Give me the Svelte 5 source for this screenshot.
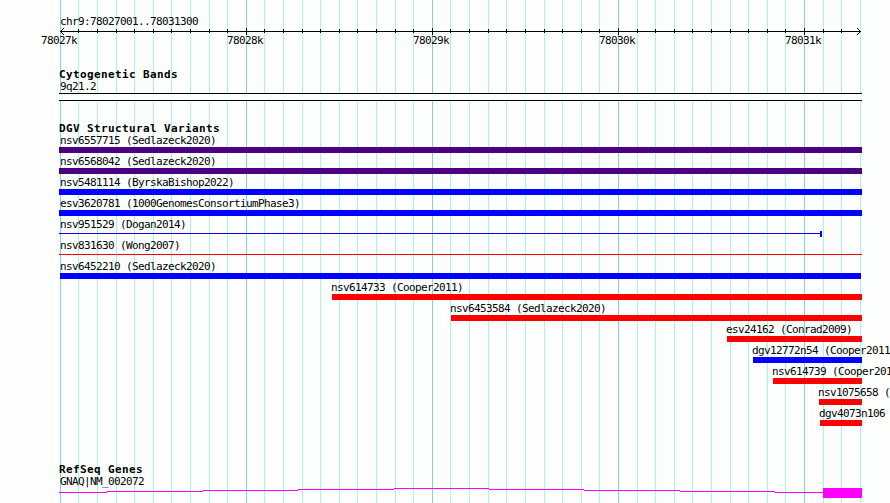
<script lang="ts">
  type Variant = {
    label: string
    start: number
    end: number
    labelX: number
    color: string
    kind?: "thin" | "capped"
  }

  const left = 60.3
  const step = 800 / 43

  const grid = Array.from({ length: 44 }, (_, i) => ({
    x: Math.floor(left + i * step),
    major: i % 10 === 0,
  }))
  const majors = grid.filter((line) => line.major)

  const indigo = "#4b0082"
  const blue = "#0000ff"
  const red = "#ff0000"

  const variants: Variant[] = [
    { label: "nsv6557715 (Sedlazeck2020)", start: 59, end: 862, labelX: 60, color: indigo },
    { label: "nsv6568042 (Sedlazeck2020)", start: 59, end: 862, labelX: 60, color: indigo },
    { label: "nsv5481114 (ByrskaBishop2022)", start: 59, end: 862, labelX: 60, color: blue },
    { label: "esv3620781 (1000GenomesConsortiumPhase3)", start: 59, end: 862, labelX: 60, color: blue },
    { label: "nsv951529 (Dogan2014)", start: 59, end: 822, labelX: 60, color: blue, kind: "capped" },
    { label: "nsv831630 (Wong2007)", start: 59, end: 862, labelX: 60, color: red, kind: "thin" },
    { label: "nsv6452210 (Sedlazeck2020)", start: 60, end: 861, labelX: 60, color: blue },
    { label: "nsv614733 (Cooper2011)", start: 332, end: 862, labelX: 331, color: red },
    { label: "nsv6453584 (Sedlazeck2020)", start: 451, end: 862, labelX: 450, color: red },
    { label: "esv24162 (Conrad2009)", start: 727, end: 862, labelX: 726, color: red },
    { label: "dgv12772n54 (Cooper2011", start: 753, end: 862, labelX: 752, color: blue },
    { label: "nsv614739 (Cooper201", start: 773, end: 862, labelX: 772, color: red },
    { label: "nsv1075658 (", start: 819, end: 862, labelX: 818, color: red },
    { label: "dgv4073n106", start: 820, end: 862, labelX: 819, color: red },
  ]

  // [from, to, y] pieces of the intron line
  const intron = [
    [59, 107, 4],
    [107, 203, 3],
    [203, 298, 2],
    [298, 394, 1],
    [394, 489, 0],
    [489, 584, 1],
    [584, 680, 2],
    [680, 775, 3],
    [775, 823, 4],
  ]
</script>

<div class="browser">
  <svg class="grid" width="890" height="503" shape-rendering="crispEdges">
    {#each grid as line}
      <rect class={line.major ? "major" : "minor"} x={line.x} y="0" width="1" height="503" />
    {/each}
  </svg>

  <header class="ruler">
    <div class="region">chr9:78027001..78031300</div>
    <svg class="scale" width="890" height="7" shape-rendering="crispEdges">
      <rect x="60" y="3" width="801" height="1" />
      {#each grid.slice(1, -1) as line}
        <rect x={line.x} y={line.major ? 0 : 1} width="1" height={line.major ? 7 : 4} />
      {/each}
      {#each [1, 2, 3] as d}
        <rect x={60 + d} y={3 - d} width="1" height="1" />
        <rect x={60 + d} y={3 + d} width="1" height="1" />
        <rect x={860 - d} y={3 - d} width="1" height="1" />
        <rect x={860 - d} y={3 + d} width="1" height="1" />
      {/each}
    </svg>
    <div class="ticks">
      {#each majors as line, i}
        <span>{78027 + i}k</span>
      {/each}
    </div>
  </header>

  <section class="track bands">
    <h2>Cytogenetic Bands</h2>
    <div class="label">9q21.2</div>
    <div class="band"></div>
  </section>

  <section class="track variants">
    <h2>DGV Structural Variants</h2>
    {#each variants as v}
      <div class="variant">
        <div class="name" style="margin-left: {v.labelX}px">{v.label}</div>
        <div
          class="bar {v.kind ?? 'solid'}"
          style="margin-left: {v.start}px; width: {v.end - v.start}px; color: {v.color}"
        ></div>
      </div>
    {/each}
  </section>

  <section class="track genes">
    <h2>RefSeq Genes</h2>
    <div class="label">GNAQ|NM_002072</div>
    <svg class="gene" width="890" height="10" shape-rendering="crispEdges">
      {#each intron as [from, to, y]}
        <rect x={from} {y} width={to - from} height="1" />
      {/each}
      <rect x="823" y="0" width="39" height="10" />
    </svg>
  </section>
</div>

<style>
  .browser {
    position: relative;
    width: 890px;
    height: 503px;
    overflow: hidden;
    background: #fdfffc;
    color: #000;
    font: 11px/13px "DejaVu Sans Mono", monospace;
    letter-spacing: -0.622px;
    white-space: nowrap;
  }

  svg {
    display: block;
  }

  .grid {
    position: absolute;
    left: 0;
    top: 0;
  }

  .minor {
    fill: #afeeee;
  }

  .major {
    fill: #87ceeb;
  }

  .ruler,
  .track {
    position: relative;
  }

  .ruler {
    height: 53px;
    padding-top: 15px;
  }

  .region {
    padding-left: 60px;
  }

  .ticks {
    display: flex;
    gap: 150px;
    padding-left: 41px;
    margin-top: -1px;
  }

  .ticks span {
    flex: none;
    width: 36px;
  }

  h2 {
    margin: 0 0 -1px;
    padding-left: 59px;
    font-size: 11px;
    line-height: 13px;
    font-weight: 700;
    letter-spacing: 0.378px;
  }

  .label {
    padding-left: 60px;
  }

  .bands {
    height: 54px;
  }

  .band {
    width: 803px;
    height: 8px;
    margin-left: 59px;
    box-sizing: border-box;
    border: solid #000;
    border-width: 1px 0;
    background: #fdfffc;
  }

  .variants {
    height: 341px;
  }

  .variant {
    height: 21px;
  }

  .bar {
    height: 6px;
  }

  .solid {
    background: currentColor;
  }

  .thin,
  .capped {
    background: linear-gradient(currentColor, currentColor) 0 2px / 100% 1px no-repeat;
  }

  .capped {
    box-sizing: border-box;
    border-right: 2px solid currentColor;
  }

  .gene {
    fill: #ff00ff;
  }
</style>
